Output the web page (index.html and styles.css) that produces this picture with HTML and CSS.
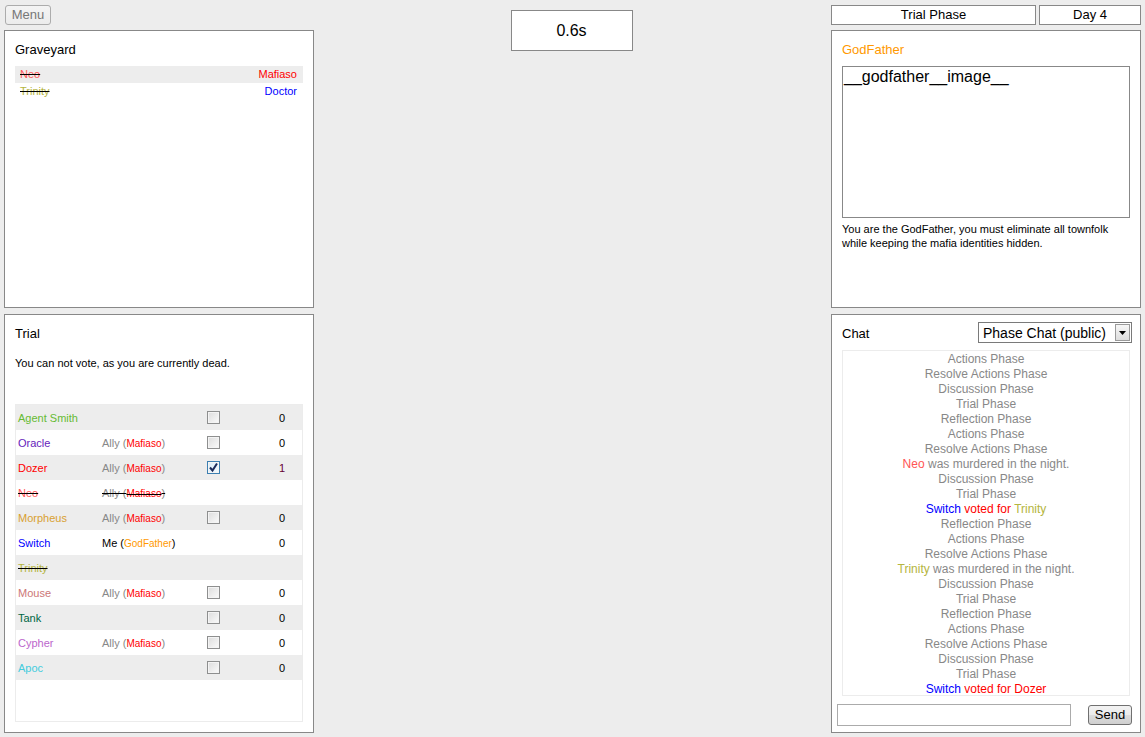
FILE: index.html
```html
<!DOCTYPE html>
<html>
<head>
<meta charset="utf-8">
<link rel="stylesheet" href="styles.css">
</head>
<body>
<div class="page">
  <div class="col side">
    <div class="menu-btn">Menu</div>
    <div class="panel top">
      <div class="title">Graveyard</div>
      <div class="grave-list">
        <div class="grave-row"><span class="dead c-neo">Neo</span><span class="c-mafia">Mafiaso</span></div>
        <div class="grave-row"><span class="dead c-trinity">Trinity</span><span class="c-doctor">Doctor</span></div>
      </div>
    </div>
    <div class="panel bottom trial">
      <div class="title">Trial</div>
      <div class="note">You can not vote, as you are currently dead.</div>
      <div class="vote-table">
        <div class="vrow"><span class="c-smith">Agent Smith</span><span></span><span class="cb"></span><span class="cnt">0</span></div>
        <div class="vrow"><span class="c-oracle">Oracle</span><span class="ally">Ally (<span class="role c-mafia">Mafiaso</span>)</span><span class="cb"></span><span class="cnt">0</span></div>
        <div class="vrow"><span class="c-dozer">Dozer</span><span class="ally">Ally (<span class="role c-mafia">Mafiaso</span>)</span><span class="cb checked"><svg width="11" height="11" viewBox="0 0 11 11"><path d="M2 5.5 L4.5 8.5 L9 1.5" fill="none" stroke="#1a2a5a" stroke-width="2"/></svg></span><span class="cnt one">1</span></div>
        <div class="vrow"><span class="dead c-neo">Neo</span><span class="ally dead">Ally (<span class="role c-mafia">Mafiaso</span>)</span><span></span><span></span></div>
        <div class="vrow"><span class="c-morpheus">Morpheus</span><span class="ally">Ally (<span class="role c-mafia">Mafiaso</span>)</span><span class="cb"></span><span class="cnt">0</span></div>
        <div class="vrow"><span class="c-switch">Switch</span><span class="me">Me (<span class="role c-god">GodFather</span>)</span><span></span><span class="cnt">0</span></div>
        <div class="vrow"><span class="dead c-trinity">Trinity</span><span></span><span></span><span></span></div>
        <div class="vrow"><span class="c-mouse">Mouse</span><span class="ally">Ally (<span class="role c-mafia">Mafiaso</span>)</span><span class="cb"></span><span class="cnt">0</span></div>
        <div class="vrow"><span class="c-tank">Tank</span><span></span><span class="cb"></span><span class="cnt">0</span></div>
        <div class="vrow"><span class="c-cypher">Cypher</span><span class="ally">Ally (<span class="role c-mafia">Mafiaso</span>)</span><span class="cb"></span><span class="cnt">0</span></div>
        <div class="vrow"><span class="c-apoc">Apoc</span><span></span><span class="cb"></span><span class="cnt">0</span></div>
      </div>
    </div>
  </div>

  <div class="col mid">
    <div class="timer">0.6s</div>
  </div>

  <div class="col side">
    <div class="phase-bar">
      <div class="phase">Trial Phase</div>
      <div class="day">Day 4</div>
    </div>
    <div class="panel top">
      <div class="title c-god">GodFather</div>
      <div class="role-image">__godfather__image__</div>
      <div class="desc">You are the GodFather, you must eliminate all townfolk<br>while keeping the mafia identities hidden.</div>
    </div>
    <div class="panel bottom chat">
      <div class="chat-head">
        <span class="chat-title">Chat</span>
        <div class="select">
          <span class="select-text">Phase Chat (public)</span>
          <span class="select-arrow"><svg width="7" height="4" viewBox="0 0 7 4"><path d="M0 0 H7 L3.5 4 Z" fill="#000"/></svg></span>
        </div>
      </div>
      <div class="chat-log">
        <div>Actions Phase</div>
        <div>Resolve Actions Phase</div>
        <div>Discussion Phase</div>
        <div>Trial Phase</div>
        <div>Reflection Phase</div>
        <div>Actions Phase</div>
        <div>Resolve Actions Phase</div>
        <div><span class="c-neo">Neo</span> was murdered in the night.</div>
        <div>Discussion Phase</div>
        <div>Trial Phase</div>
        <div><span class="c-switch">Switch</span> <span class="c-mafia">voted for</span> <span class="c-trinity">Trinity</span></div>
        <div>Reflection Phase</div>
        <div>Actions Phase</div>
        <div>Resolve Actions Phase</div>
        <div><span class="c-trinity">Trinity</span> was murdered in the night.</div>
        <div>Discussion Phase</div>
        <div>Trial Phase</div>
        <div>Reflection Phase</div>
        <div>Actions Phase</div>
        <div>Resolve Actions Phase</div>
        <div>Discussion Phase</div>
        <div>Trial Phase</div>
        <div><span class="c-switch">Switch</span> <span class="c-mafia">voted for</span> <span class="c-mafia">Dozer</span></div>
      </div>
      <div class="chat-input-row">
        <div class="chat-input"></div>
        <div class="send-btn">Send</div>
      </div>
    </div>
  </div>
</div>
</body>
</html>
```

FILE: styles.css
```css
html, body {
  margin: 0;
  padding: 0;
}
body {
  background: #ededed;
  font-family: "Liberation Sans", Arial, sans-serif;
  color: #000;
}
.page {
  display: flex;
  box-sizing: border-box;
  width: 1145px;
  height: 737px;
  padding: 5px 4px 4px 4px;
}
.col {
  display: flex;
  flex-direction: column;
}
.side {
  width: 310px;
  flex: none;
}
.mid {
  flex: 1;
  align-items: center;
  padding-top: 5px;
}
.menu-btn {
  box-sizing: border-box;
  width: 46px;
  height: 20px;
  margin: 0 0 5px 1px;
  border: 1px solid #acacac;
  border-radius: 3px;
  background: linear-gradient(#f4f4f4, #ececec);
  color: #777;
  font-size: 13px;
  line-height: 18px;
  text-align: center;
}
.panel {
  box-sizing: border-box;
  border: 1px solid #888;
  background: #fff;
  padding: 11px 10px 10px 10px;
}
.panel.top {
  height: 278px;
  margin-bottom: 6px;
}
.panel.bottom {
  flex: 1;
}
.title {
  font-size: 13px;
  line-height: 15px;
  height: 15px;
}
.grave-list {
  margin-top: 9px;
  font-size: 11px;
}
.grave-row {
  display: flex;
  justify-content: space-between;
  height: 17px;
  line-height: 17px;
  padding: 0 6px 0 5px;
}
.grave-row:nth-child(odd) {
  background: #ededed;
}
.dead {
  text-decoration: line-through;
  text-decoration-color: #000;
}
.c-neo { color: #f55; }
.c-trinity { color: #b5b540; }
.c-mafia { color: #f00; }
.c-doctor { color: #00f; }
.c-god { color: #f90; }
.c-smith { color: #6b3; }
.c-oracle { color: #62b; }
.c-dozer { color: #f00; }
.c-morpheus { color: #d9a030; }
.c-switch { color: #00f; }
.c-mouse { color: #c77; }
.c-tank { color: #064; }
.c-cypher { color: #b6c; }
.c-apoc { color: #4cd; }

.trial {
  display: flex;
  flex-direction: column;
}
.note {
  margin-top: 16px;
  font-size: 11px;
  line-height: 13px;
}
.vote-table {
  flex: 1;
  margin-top: 34px;
  border: 1px solid #ececec;
  font-size: 11px;
}
.vrow {
  display: grid;
  grid-template-columns: 84px 105px 55px 40px;
  align-items: center;
  height: 25px;
  padding-left: 2px;
}
.vrow:nth-child(odd) {
  background: #ededed;
}
.ally {
  color: #888;
}
.me {
  color: #000;
}
.role {
  font-size: 10px;
}
.cb {
  box-sizing: border-box;
  width: 13px;
  height: 13px;
  border: 1px solid #8e8f8f;
  background: linear-gradient(135deg, #dcdcdc, #fbfbfb);
  box-shadow: inset 0 0 0 1px #f4f4f4;
  display: flex;
  align-items: center;
  justify-content: center;
}
.cb.checked {
  border-color: #3c7fb1;
  background: linear-gradient(135deg, #d9ecf8, #f3fafe);
}
.cnt {
  text-align: center;
}
.cnt.one {
  color: #603;
}

.timer {
  box-sizing: border-box;
  width: 122px;
  height: 41px;
  margin-right: 2px;
  border: 1px solid #888;
  background: #fff;
  font-size: 16px;
  line-height: 39px;
  text-align: center;
}

.phase-bar {
  display: flex;
  gap: 3px;
  height: 20px;
  margin-bottom: 5px;
}
.phase, .day {
  box-sizing: border-box;
  border: 1px solid #888;
  background: #fff;
  font-size: 13px;
  line-height: 18px;
  text-align: center;
}
.phase {
  width: 205px;
}
.day {
  flex: 1;
}
.role-image {
  box-sizing: border-box;
  margin-top: 9px;
  height: 152px;
  border: 1px solid #888;
  font-size: 16px;
  line-height: 20px;
  padding-left: 1px;
}
.desc {
  margin-top: 4px;
  font-size: 11px;
  line-height: 14px;
}

.chat {
  display: flex;
  flex-direction: column;
  padding: 7px 5px 6px 5px;
}
.chat-head {
  display: flex;
  justify-content: space-between;
  align-items: center;
  height: 21px;
}
.chat-title {
  font-size: 13px;
  margin-left: 5px;
  padding-top: 1px;
}
.select {
  box-sizing: border-box;
  display: flex;
  align-items: center;
  justify-content: space-between;
  width: 154px;
  height: 21px;
  margin-right: 3px;
  border: 1px solid #7a7a7a;
  background: #fff;
}
.select-text {
  font-size: 14px;
  padding-left: 4px;
}
.select-arrow {
  box-sizing: border-box;
  width: 15px;
  height: 17px;
  margin-right: 1px;
  border: 1px solid #9a9a9a;
  background: linear-gradient(#f6f6f6, #dedede);
  display: flex;
  align-items: center;
  justify-content: center;
}
.chat-log {
  box-sizing: border-box;
  height: 346px;
  margin: 7px 5px 0 5px;
  padding-top: 1px;
  border: 1px solid #ececec;
  overflow: hidden;
  font-size: 12px;
  line-height: 15px;
  color: #888;
  text-align: center;
}
.chat-input-row {
  display: flex;
  justify-content: space-between;
  align-items: flex-start;
  margin-top: 8px;
}
.chat-input {
  box-sizing: border-box;
  width: 234px;
  height: 22px;
  border: 1px solid #ababab;
  background: #fff;
}
.send-btn {
  box-sizing: border-box;
  width: 44px;
  height: 20px;
  margin: 1px 3px 0 0;
  border: 1px solid #707070;
  border-radius: 3px;
  background: linear-gradient(#f2f2f2, #ebebeb 50%, #dddddd 50%, #cfcfcf);
  font-size: 13px;
  line-height: 18px;
  text-align: center;
}
```
